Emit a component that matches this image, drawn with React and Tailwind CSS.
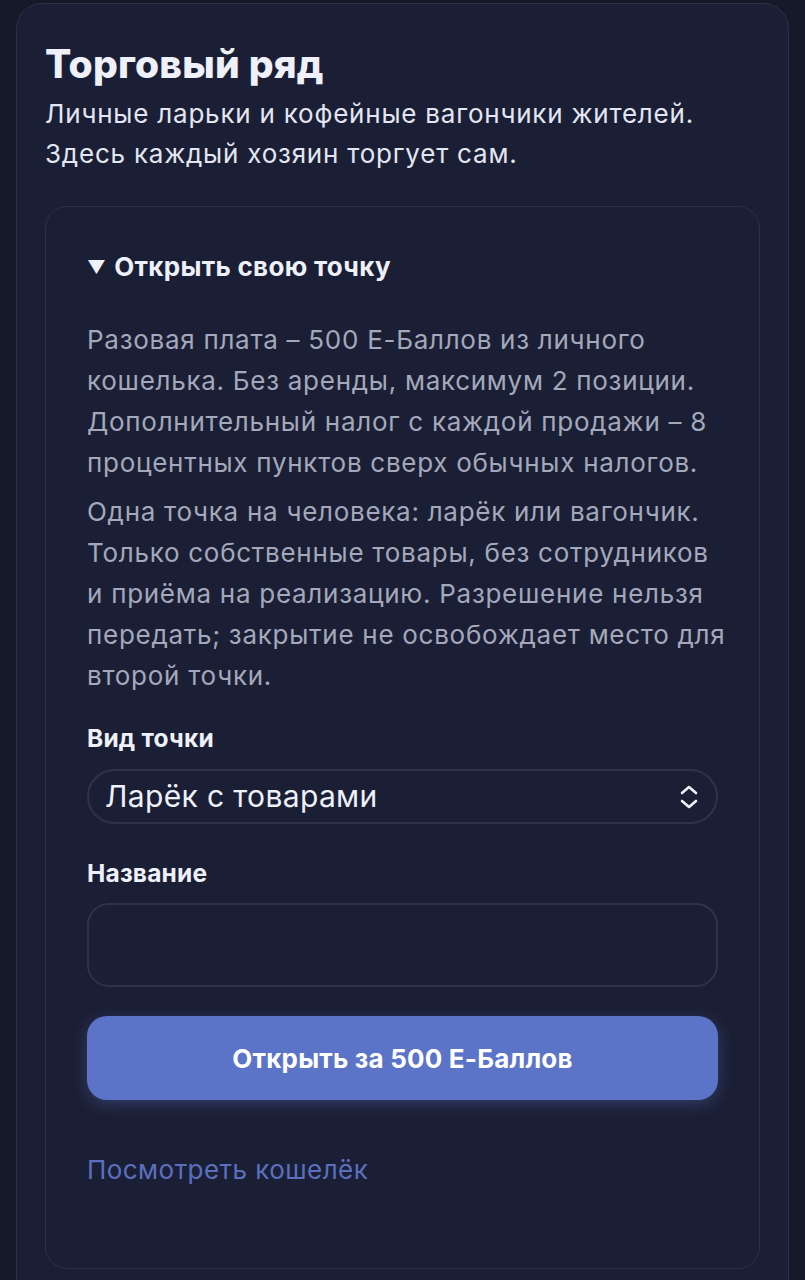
import React from "react";

const P1 = [
  "Разовая плата – 500 Е-Баллов из личного",
  "кошелька. Без аренды, максимум 2 позиции.",
  "Дополнительный налог с каждой продажи – 8",
  "процентных пунктов сверх обычных налогов.",
];
const P2 = [
  "Одна точка на человека: ларёк или вагончик.",
  "Только собственные товары, без сотрудников",
  "и приёма на реализацию. Разрешение нельзя",
  "передать; закрытие не освобождает место для",
  "второй точки.",
];

export default function App() {
  return (
    <div className="min-h-[1280px] bg-[#151a2b] px-4 pt-[3px]" style={{ fontFamily: "Inter, 'Noto Sans', sans-serif" }}>
      <div className="rounded-t-[26px] border border-[#2c3146] bg-[#1b1f35] px-[28px] pt-[38px] pb-10 min-h-[1300px]">
        <h1 className="text-[39px] font-extrabold leading-[44px] text-[#eef0fa] tracking-[0.2px]">Торговый ряд</h1>
        <p className="mt-[8px] text-[26px] leading-[40px] text-[#e3e6f2] tracking-[0.78px]">
          Личные ларьки и кофейные вагончики жителей.
          <br />
          Здесь каждый хозяин торгует сам.
        </p>
        <div className="mt-[32px] rounded-[22px] border border-[#2c3146] bg-[#1b1f35] px-[41px] pt-[42px] pb-[80px]">
          <div className="flex items-center gap-[8px] text-[26px] font-bold leading-[36px] text-[#eef0fa] tracking-[0.3px]">
            <span className="text-[18px]">▼</span>
            <span>Открыть свою точку</span>
          </div>
          <div className="mt-[34px] text-[26px] leading-[41px] text-[#a3a8ba] tracking-[0.72px]">
            {P1.map((l, i) => (
              <div key={i} className="whitespace-nowrap">{l}</div>
            ))}
          </div>
          <div className="mt-[8px] text-[26px] leading-[41px] text-[#a3a8ba] tracking-[0.72px]">
            {P2.map((l, i) => (
              <div key={i} className="whitespace-nowrap">{l}</div>
            ))}
          </div>
          <div className="mt-[27px] text-[24.5px] font-bold leading-[30px] text-[#eef0fa] tracking-[0.2px]">Вид точки</div>
          <div className="mt-[16px] flex h-[55px] items-center justify-between rounded-[28px] border-2 border-[#2e3347] pl-[16px] pr-[16px]">
            <span className="text-[30px] text-[#eef0fa] tracking-[0.35px]">Ларёк с товарами</span>
            <svg width="22" height="26" viewBox="0 0 22 26" fill="none" stroke="#eef0fa" strokeWidth="2.6" strokeLinecap="round" strokeLinejoin="round">
              <path d="M4 9l7-6 7 6" />
              <path d="M4 17l7 6 7-6" />
            </svg>
          </div>
          <div className="mt-[34px] text-[24.5px] font-bold leading-[30px] text-[#eef0fa] tracking-[0.2px]">Название</div>
          <div className="mt-[15px] h-[84px] rounded-[22px] border-2 border-[#2e3347]"></div>
          <button className="mt-[29px] flex h-[84px] w-full items-center justify-center rounded-[20px] bg-[#5c74c7] text-[26px] font-bold text-white tracking-[0.2px] shadow-[0_4px_16px_rgba(92,116,199,0.35)]">
            Открыть за 500 Е-Баллов
          </button>
          <div className="mt-[52px] text-[26px] leading-[36px] text-[#5b6fbf] tracking-[0.45px]">Посмотреть кошелёк</div>
        </div>
      </div>
    </div>
  );
}
